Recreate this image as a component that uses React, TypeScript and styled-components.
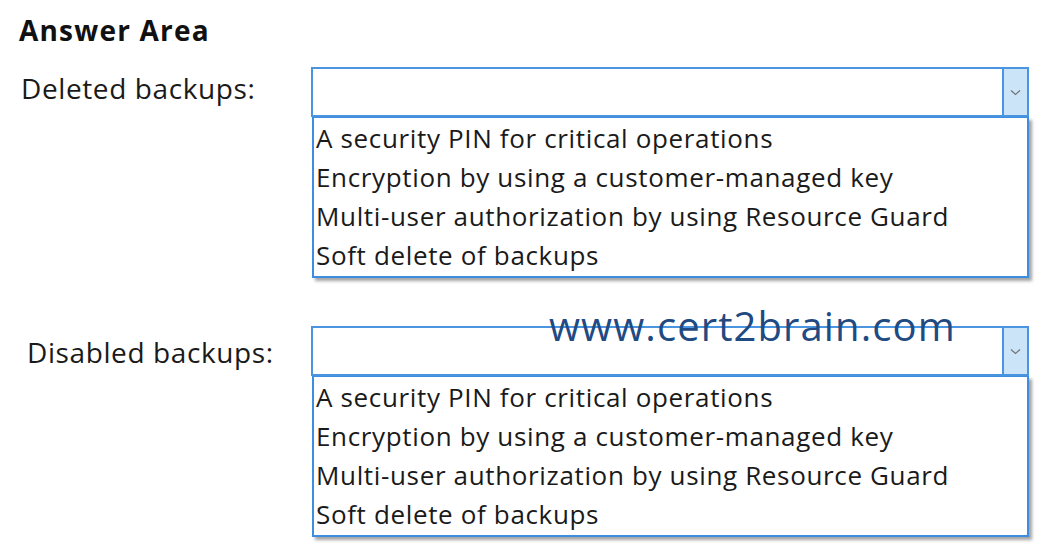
import React from "react";
import styled, { createGlobalStyle } from "styled-components";

const Global = createGlobalStyle`
  html, body { margin: 0; padding: 0; background: #ffffff; }
  body { font-family: "Open Sans", "Noto Sans", sans-serif; color: #111; }
`;

const Page = styled.div`
  position: relative;
  width: 1050px;
  height: 558px;
  padding: 13px 0 0 19px;
  box-sizing: border-box;
  display: flex;
  flex-direction: column;
`;

const Title = styled.h1`
  margin: 0;
  font-size: 28px;
  line-height: 34px;
  font-weight: 700;
  letter-spacing: 1.2px;
  color: #111;
`;

const Row = styled.div<{ $top: number; $indent: number }>`
  display: flex;
  align-items: flex-start;
  margin-top: ${(p) => p.$top}px;
  padding-left: ${(p) => p.$indent}px;
`;

const Label = styled.div<{ $width: number; $offset: number }>`
  width: ${(p) => p.$width}px;
  flex: none;
  font-size: 28px;
  line-height: 36px;
  letter-spacing: 0.6px;
  padding-top: ${(p) => p.$offset}px;
  color: #1a1a1a;
`;

const Dropdown = styled.div`
  width: 718px;
  display: flex;
  flex-direction: column;
`;

const SelectBox = styled.div`
  height: 50px;
  box-sizing: border-box;
  border: 2px solid #4a94e0;
  display: flex;
  justify-content: flex-end;
  background: #fff;
`;

const Arrow = styled.div`
  width: 23px;
  background: #cce4f7;
  border-left: 2px solid #4a94e0;
  display: flex;
  align-items: center;
  justify-content: center;
`;

const List = styled.ul`
  margin: 0 0 0 1px;
  padding: 1px 0 1px 2px;
  list-style: none;
  width: 717px;
  box-sizing: border-box;
  border: 2px solid #3d8ee0;
  border-top-width: 1px;
  box-shadow: 3px 3px 3px rgba(90, 90, 90, 0.55);
  background: #fff;
`;

const Item = styled.li`
  font-size: 26px;
  line-height: 39px;
  letter-spacing: 0.65px;
  color: #1a1a1a;
  white-space: nowrap;
`;

const Watermark = styled.div`
  position: absolute;
  left: 549px;
  top: 302px;
  font-size: 40px;
  line-height: 48px;
  letter-spacing: 1.1px;
  color: #1f4a82;
`;

const options = [
  "A security PIN for critical operations",
  "Encryption by using a customer-managed key",
  "Multi-user authorization by using Resource Guard",
  "Soft delete of backups",
];

const Chevron = () => (
  <svg width="11" height="7" viewBox="0 0 11 7">
    <path d="M1 1.5 L5.5 5.5 L10 1.5" fill="none" stroke="#6f7478" strokeWidth="1.2" />
  </svg>
);

const Select = () => (
  <Dropdown>
    <SelectBox>
      <Arrow>
        <Chevron />
      </Arrow>
    </SelectBox>
    <List>
      {options.map((o) => (
        <Item key={o}>{o}</Item>
      ))}
    </List>
  </Dropdown>
);

export default function App() {
  return (
    <>
      <Global />
      <Page>
        <Title>Answer Area</Title>
        <Row $top={20} $indent={2}>
          <Label $width={290} $offset={3}>Deleted backups:</Label>
          <Select />
        </Row>
        <Row $top={48} $indent={8}>
          <Label $width={284} $offset={8}>Disabled backups:</Label>
          <Select />
        </Row>
        <Watermark>www.cert2brain.com</Watermark>
      </Page>
    </>
  );
}
